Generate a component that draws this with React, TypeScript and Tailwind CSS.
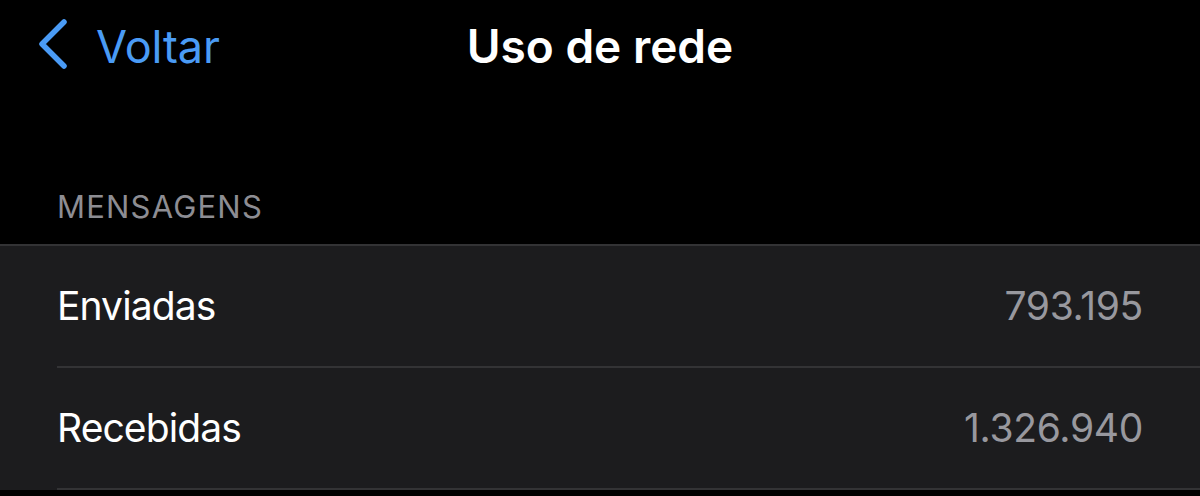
const rows = [
  { label: "Enviadas", value: "793.195" },
  { label: "Recebidas", value: "1.326.940" },
];

export default function App() {
  return (
    <div className="w-[1200px] h-[496px] overflow-hidden bg-black font-['Inter',sans-serif] antialiased">
      <header className="relative h-[92px] flex items-center">
        <button className="flex items-center pl-[36px] text-[#4a9bf5]">
          <svg width="36" height="56" viewBox="0 0 36 56" fill="none">
            <path d="M28 4 L6 26 L28 48" stroke="currentColor" strokeWidth="5.5" strokeLinecap="round" strokeLinejoin="round" />
          </svg>
          <span className="ml-[24px] text-[45px] leading-none tracking-[-0.1px]">Voltar</span>
        </button>
        <h1 className="absolute left-0 right-0 text-center text-[46px] leading-none font-semibold text-white pointer-events-none">
          Uso de rede
        </h1>
      </header>

      <div className="h-[152px] flex items-end pl-[57px] pb-[22px]">
        <span className="text-[31px] leading-none text-[#8d8d93] tracking-[1.2px]">MENSAGENS</span>
      </div>

      <section className="bg-[#1c1c1e] border-t-2 border-[#333335]">
        {rows.map((r) => (
          <div key={r.label} className="pl-[57px]">
            <div className="h-[122px] flex items-center justify-between pr-[57px] border-b-2 border-[#333335]">
              <span className="text-[39px] text-white tracking-[-0.9px]">{r.label}</span>
              <span className="text-[39px] text-[#98989e] tracking-[-0.3px]">{r.value}</span>
            </div>
          </div>
        ))}
      </section>
    </div>
  );
}
